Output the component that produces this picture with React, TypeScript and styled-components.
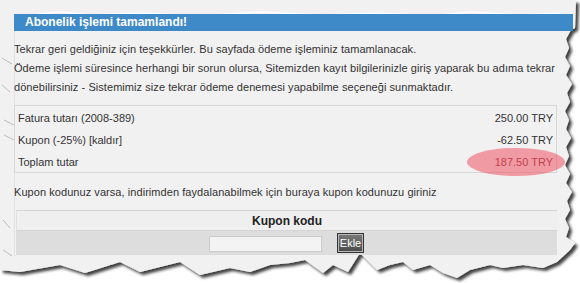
import React from "react";
import styled, { createGlobalStyle } from "styled-components";

const GlobalStyle = createGlobalStyle`
  html, body {
    margin: 0;
    padding: 0;
    background: #ffffff;
  }
  body {
    font-family: "Liberation Sans", Arial, sans-serif;
    font-size: 11px;
    color: #333333;
  }
`;

const Page = styled.div`
  position: relative;
  width: 580px;
  height: 283px;
  overflow: hidden;
  background: #ffffff;
`;

const PaperArt = styled.svg`
  position: absolute;
  top: 0;
  left: 0;
  width: 580px;
  height: 283px;
`;

const Content = styled.div`
  position: relative;
  display: flex;
  flex-direction: column;
  padding: 14px 0 0 14px;
`;

const TitleBar = styled.div`
  width: 548px;
  height: 17px;
  padding-left: 11px;
  background: #3e89c7;
  color: #ffffff;
  font-weight: bold;
  font-size: 12px;
  line-height: 17px;
  white-space: nowrap;
`;

const Intro = styled.p`
  margin: 9px 0 0;
  line-height: 19px;
  letter-spacing: 0.06px;
  white-space: nowrap;
`;

const Summary = styled.div`
  width: 541px;
  margin-top: 8px;
  border: 1px solid #d8d8d8;
  display: flex;
  flex-direction: column;
`;

const SummaryRow = styled.div`
  position: relative;
  height: 21px;
  padding: 1px 3px 0;
  display: flex;
  align-items: center;
  justify-content: space-between;
`;

const Amount = styled.span<{ $highlight?: boolean }>`
  position: relative;
  color: ${(p) => (p.$highlight ? "#8a2f38" : "#333333")};
`;

const Marker = styled.span`
  position: absolute;
  left: -28px;
  top: -8px;
  width: 98px;
  height: 28px;
  border-radius: 50%;
  background: rgba(238, 82, 98, 0.55);
`;

const Hint = styled.p`
  margin: 10px 0 0;
  line-height: 18px;
  letter-spacing: 0.06px;
  white-space: nowrap;
`;

const CouponBox = styled.div`
  width: 541px;
  margin: 9px 0 0 2px;
  display: flex;
  flex-direction: column;
`;

const CouponHead = styled.div`
  height: 19px;
  border-top: 1px solid #d4d4d4;
  border-bottom: 1px solid #d4d4d4;
  border-left: 1px solid #e0e0e0;
  background: #efefef;
  display: flex;
  align-items: center;
  justify-content: center;
  font-weight: bold;
  font-size: 12px;
  color: #222222;
`;

const CouponForm = styled.div`
  height: 24px;
  background: #dddddd;
  display: flex;
  align-items: center;
  justify-content: center;
  gap: 15px;
`;

const CodeInput = styled.input`
  box-sizing: border-box;
  width: 113px;
  height: 16px;
  margin-top: 2px;
  border: 1px solid #cbcbcb;
  background: #f3f3f3;
  padding: 0 2px;
  font: inherit;
`;

const AddButton = styled.button`
  box-sizing: border-box;
  width: 27px;
  height: 20px;
  padding: 0;
  border: 1px solid #333333;
  box-shadow: inset 0 0 0 1px #b8b8b8;
  background: linear-gradient(#7a7a7a, #4a4a4a);
  color: #ffffff;
  font-family: "Liberation Sans", Arial, sans-serif;
  font-size: 11px;
`;

const rightEdge = (() => {
  const pts: string[] = [];
  const xs = [571, 566, 569, 565, 570, 566, 572, 567, 570, 565, 569, 566];
  let i = 0;
  for (let y = 30; y <= 240; y += 9) {
    pts.push(`${xs[i % xs.length]},${y}`);
    i++;
  }
  return pts.join(" ");
})();

const bottomEdge = [
  "575,243", "570,250", "557,262", "543,268", "523,265", "503,268",
  "490,265", "470,270", "457,278", "443,273", "430,265", "413,270",
  "403,262", "390,265", "377,270", "360,253", "348,272", "333,265",
  "323,273", "305,260", "290,263", "270,265", "250,272", "230,268",
  "200,275", "180,262", "140,272", "120,262", "85,273", "60,265",
  "20,272", "0,270",
].join(" ");

const Paper = () => (
  <PaperArt viewBox="0 0 580 283">
    <defs>
      <filter id="tear" x="-5%" y="-5%" width="110%" height="110%">
        <feDropShadow dx="3" dy="3" stdDeviation="1.6" floodColor="#000" floodOpacity="0.75" />
      </filter>
    </defs>
    <polygon
      points={`0,0 576,0 575,28 ${rightEdge} ${bottomEdge}`}
      fill="#f1f1f1"
      filter="url(#tear)"
    />
    <polyline
      points="38,14 60,12 90,15 140,13 200,16 260,12 320,15 380,13 430,16 470,12 520,15 560,13"
      fill="none"
      stroke="#ffffff"
      strokeWidth="1.5"
      opacity="0.9"
    />
    <line x1="14.5" y1="31" x2="14.5" y2="256" stroke="#e2e2e2" strokeWidth="1" />
    <g stroke="#9a9a9a" strokeWidth="1" opacity="0.6">
      <line x1="2" y1="58" x2="12" y2="64" />
      <line x1="2" y1="85" x2="10" y2="92" />
      <line x1="4" y1="120" x2="14" y2="125" />
      <line x1="4" y1="135" x2="14" y2="140" />
      <line x1="3" y1="220" x2="10" y2="228" />
      <line x1="3" y1="250" x2="12" y2="256" />
    </g>
  </PaperArt>
);

export default function App() {
  return (
    <Page>
      <GlobalStyle />
      <Paper />
      <Content>
        <TitleBar>Abonelik işlemi tamamlandı!</TitleBar>
        <Intro>
          Tekrar geri geldiğiniz için teşekkürler. Bu sayfada ödeme işleminiz tamamlanacak.
          <br />
          Ödeme işlemi süresince herhangi bir sorun olursa, Sitemizden kayıt bilgilerinizle giriş yaparak bu adıma tekrar
          <br />
          dönebilirsiniz - Sistemimiz size tekrar ödeme denemesi yapabilme seçeneği sunmaktadır.
        </Intro>
        <Summary>
          <SummaryRow>
            <span>Fatura tutarı (2008-389)</span>
            <Amount>250.00 TRY</Amount>
          </SummaryRow>
          <SummaryRow>
            <span>Kupon (-25%) [kaldır]</span>
            <Amount>-62.50 TRY</Amount>
          </SummaryRow>
          <SummaryRow>
            <span>Toplam tutar</span>
            <Amount $highlight>
              187.50 TRY
              <Marker />
            </Amount>
          </SummaryRow>
        </Summary>
        <Hint>Kupon kodunuz varsa, indirimden faydalanabilmek için buraya kupon kodunuzu giriniz</Hint>
        <CouponBox>
          <CouponHead>Kupon kodu</CouponHead>
          <CouponForm>
            <CodeInput type="text" />
            <AddButton type="button">Ekle</AddButton>
          </CouponForm>
        </CouponBox>
      </Content>
    </Page>
  );
}
